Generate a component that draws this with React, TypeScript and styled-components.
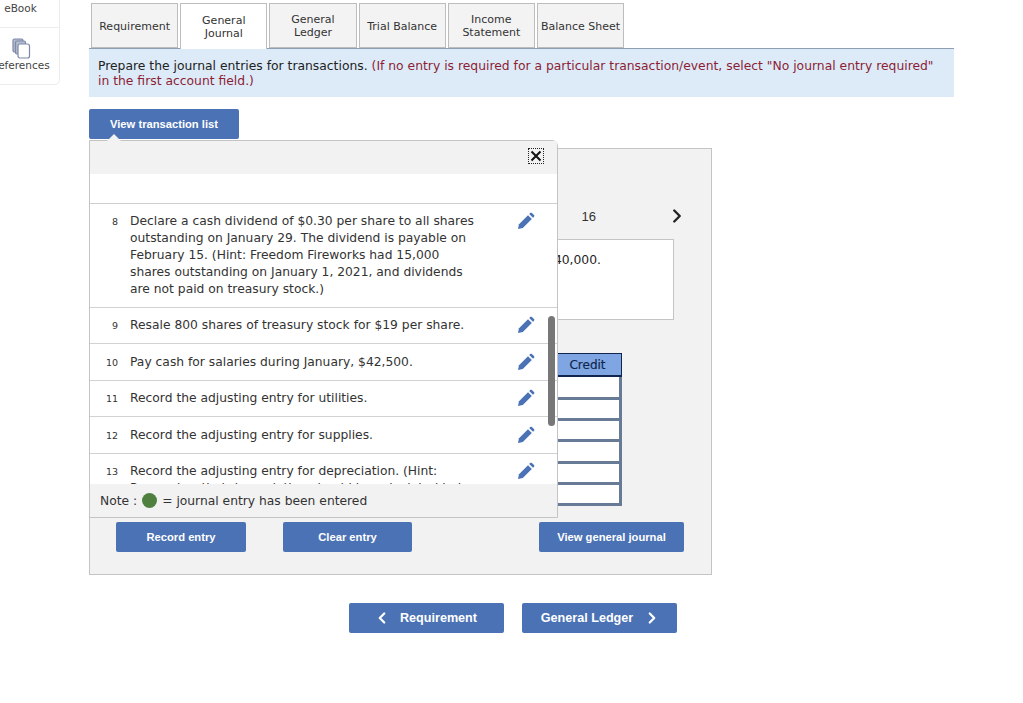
import { ChevronLeft, ChevronRight } from 'lucide-react';
import styled, { createGlobalStyle } from 'styled-components';

const GlobalStyle = createGlobalStyle`
  html, body {
    margin: 0;
    background: #fff;
    overflow: hidden;
  }

  body {
    font-family: "DejaVu Sans", Verdana, sans-serif;
    color: #222;
  }
`;

const Page = styled.div`
  display: flex;
  height: 703px;
`;

const Sidebar = styled.aside`
  flex: none;
  box-sizing: border-box;
  width: 80px;
  height: 95px;
  margin: -10px 0 0 -20px;
  padding-left: 1px;
  border: 1px solid #ececec;
  border-radius: 0 0 5px 0;
  font-size: 10.5px;
  color: #444;
`;

const SideItem = styled.div<{ $tall?: boolean }>`
  display: flex;
  flex-direction: column;
  align-items: center;
  height: ${p => (p.$tall ? '58px' : '36px')};
  padding-top: ${p => (p.$tall ? '10px' : '11px')};
  box-sizing: border-box;
  border-top: ${p => (p.$tall ? '1px solid #ececec' : 'none')};
`;

const SideLabel = styled.span`
  white-space: nowrap;
`;

const SideIcon = styled.svg`
  width: 20px;
  height: 21px;
`;

const Main = styled.main`
  width: 865px;
  margin-left: 29px;
`;

const Tabs = styled.nav`
  display: flex;
  gap: 2px;
  height: 49px;
  padding: 3px 0 0 2px;
  box-sizing: border-box;
  border-bottom: 1px solid #8f9fb3;
`;

const Tab = styled.div<{ $active?: boolean }>`
  display: flex;
  align-items: center;
  justify-content: center;
  box-sizing: border-box;
  width: 87.2px;
  height: ${p => (p.$active ? '46px' : '45px')};
  padding-top: 1px;
  border: 1px solid #bdbdbd;
  border-bottom: ${p => (p.$active ? 'none' : '1px solid #bdbdbd')};
  background: ${p => (p.$active ? '#fff' : '#f3f3f3')};
  text-align: center;
  font-size: 11px;
  line-height: 13px;
  color: #333;
`;

const Banner = styled.div`
  height: 48px;
  padding: 10px 9px 0;
  box-sizing: border-box;
  background: #ddebf8;
  font-size: 12.35px;
  line-height: 15px;
  color: #222;
`;

const Warning = styled.span`
  color: #8c1d35;
`;

const Button = styled.button<{ $w: number; $large?: boolean }>`
  display: inline-flex;
  align-items: center;
  justify-content: center;
  gap: 9px;
  flex: none;
  width: ${p => p.$w}px;
  height: 30px;
  padding: 0;
  border: none;
  border-radius: 2px;
  background: #4a72b5;
  color: #fff;
  font-family: "Liberation Sans", Arial, sans-serif;
  font-weight: bold;
  font-size: ${p => (p.$large ? '12.6px' : '11.2px')};
`;

const ListButtonRow = styled.div`
  margin: 12px 0 9px;
  height: 30px;
`;

const Panel = styled.section`
  position: relative;
  box-sizing: border-box;
  width: 623px;
  height: 427px;
  padding-top: 52px;
  border: 1px solid #c4c4c4;
  background: #f2f2f2;
`;

const StepRow = styled.div`
  display: flex;
  align-items: center;
  justify-content: flex-end;
  gap: 70px;
  height: 30px;
  padding-right: 23px;
  font-family: "Liberation Sans", Arial, sans-serif;
  font-size: 13px;
  color: #333;
`;

const Narrative = styled.div`
  box-sizing: border-box;
  height: 81px;
  margin: 8px 37px 0 24px;
  padding: 13px 72px 0 0;
  border: 1px solid #c4c4c4;
  background: #fff;
  text-align: right;
  font-size: 12.35px;
  line-height: 15px;
`;

const CreditColumn = styled.div`
  box-sizing: border-box;
  width: 80px;
  height: 153px;
  margin: 33px 89px 0 auto;
  border-right: 3px solid #677a96;
  border-bottom: 3px solid #677a96;
`;

const CreditHeader = styled.div`
  box-sizing: border-box;
  height: 24px;
  margin-right: -3px;
  border: 1px solid #10264f;
  border-bottom-width: 2px;
  padding-left: 11px;
  background: #7fa6e3;
  text-align: center;
  font-size: 12px;
  line-height: 22px;
  color: #10264f;
  -webkit-text-stroke: 0.2px #10264f;
`;

const CreditCell = styled.div`
  box-sizing: border-box;
  height: 21.4px;
  background: #fff;
  & + & {
    border-top: 3px solid #677a96;
  }
  ${CreditHeader} + & {
    height: 19.5px;
  }
`;

const ActionRow = styled.div`
  display: flex;
  gap: 37px;
  margin-top: 16px;
  padding: 0 27px 0 26px;
`;

const PushRight = styled.div`
  margin-left: auto;
`;

const Popover = styled.div`
  position: absolute;
  top: -9px;
  left: -1px;
  display: flex;
  flex-direction: column;
  box-sizing: border-box;
  width: 469px;
  height: 378px;
  border: 1px solid #c4c4c4;
  border-radius: 0 6px 0 0;
  background: #fff;
`;

const Caret = styled.div`
  position: absolute;
  top: -7px;
  left: 17px;
  width: 0;
  height: 0;
  border-left: 7px solid transparent;
  border-right: 7px solid transparent;
  border-bottom: 7px solid #f2f2f2;
`;

const PopoverHeader = styled.div`
  display: flex;
  justify-content: flex-end;
  flex: none;
  height: 33px;
  padding: 7px 13px 0 0;
  box-sizing: border-box;
  background: #f2f2f2;
`;

const CloseButton = styled.button`
  display: flex;
  align-items: center;
  justify-content: center;
  box-sizing: border-box;
  width: 16px;
  height: 16px;
  padding: 0;
  border: 1px dotted #222;
  background: transparent;
`;

const PopoverSpacer = styled.div`
  flex: none;
  height: 29px;
  border-bottom: 1px solid #cfcfcf;
`;

const EntryList = styled.div`
  position: relative;
  flex: none;
  height: 280px;
  overflow: hidden;
`;

const Entry = styled.div<{ $h: number }>`
  display: flex;
  box-sizing: border-box;
  height: ${p => p.$h}px;
  padding: ${p => (p.$h === 37 ? '10px' : '9px')} 22px 0 0;
  border-bottom: 1px solid #d2d2d2;
`;

const EntryNumber = styled.span`
  flex: none;
  width: 29px;
  padding-right: 1px;
  box-sizing: border-box;
  text-align: right;
  font-size: 9.5px;
  line-height: 17px;
  color: #333;
`;

const EntryText = styled.div`
  flex: none;
  width: 350px;
  margin-left: 11px;
  font-size: 12.3px;
  line-height: 17px;
  color: #333;
`;

const EntryAction = styled.div`
  display: flex;
  justify-content: flex-end;
  flex: 1;
  margin-top: -1px;
`;

const ScrollThumb = styled.div`
  position: absolute;
  top: 112px;
  right: 2px;
  width: 7px;
  height: 110px;
  border-radius: 4px;
  background: #777;
`;

const NoteBar = styled.div`
  display: flex;
  align-items: center;
  flex: 1;
  gap: 5px;
  padding-left: 10px;
  background: #f2f2f2;
  font-size: 12.3px;
  color: #333;
`;

const Dot = styled.span`
  flex: none;
  width: 15px;
  height: 15px;
  border-radius: 50%;
  background: #4f8040;
`;

const BottomNav = styled.div`
  display: flex;
  gap: 18px;
  margin: 28px 0 0 260px;

  button {
    padding-bottom: 1px;
  }
  button:first-child {
    padding-right: 3px;
  }
  button:last-child {
    gap: 10px;
    padding-left: 3px;
  }
`;

const PencilIcon = () => (
  <svg width="18" height="18" viewBox="0 0 18 18" fill="#4a72b5">
    <path d="M1 17l1-4.8L11 3.2l3.8 3.8L5.8 16z" />
    <path d="M12.2 2l1-1c.5-.5 1.2-.5 1.7 0l2.1 2.1c.5.5.5 1.2 0 1.7l-1 1z" />
  </svg>
);

const entries = [
  {
    n: 8,
    h: 104,
    text: 'Declare a cash dividend of $0.30 per share to all shares outstanding on January 29. The dividend is payable on February 15. (Hint: Freedom Fireworks had 15,000 shares outstanding on January 1, 2021, and dividends are not paid on treasury stock.)',
  },
  { n: 9, h: 36, text: 'Resale 800 shares of treasury stock for $19 per share.' },
  { n: 10, h: 37, text: 'Pay cash for salaries during January, $42,500.' },
  { n: 11, h: 36, text: 'Record the adjusting entry for utilities.' },
  { n: 12, h: 37, text: 'Record the adjusting entry for supplies.' },
  {
    n: 13,
    h: 70,
    text: 'Record the adjusting entry for depreciation. (Hint: Remember that depreciation should be calculated but for only part of the year.)',
  },
];

const App = (): JSX.Element => {
  return (
    <>
      <GlobalStyle />
      <Page>
        <Sidebar>
          <SideItem>
            <SideLabel>eBook</SideLabel>
          </SideItem>
          <SideItem $tall>
            <SideIcon viewBox="0 0 20 21" fill="none" stroke="#7d89a8" strokeWidth="1.2">
              <rect x="2" y="1" width="10" height="13" rx="1.5" fill="#b4bccf" />
              <rect x="4.5" y="3" width="10" height="13" rx="1.5" fill="#b4bccf" />
              <rect x="7" y="6" width="11.5" height="14" rx="2" fill="#fff" />
            </SideIcon>
            <SideLabel>References</SideLabel>
          </SideItem>
        </Sidebar>

        <Main>
          <Tabs>
            <Tab>Requirement</Tab>
            <Tab $active>
              General
              <br />
              Journal
            </Tab>
            <Tab>
              General
              <br />
              Ledger
            </Tab>
            <Tab>Trial Balance</Tab>
            <Tab>
              Income
              <br />
              Statement
            </Tab>
            <Tab>Balance Sheet</Tab>
          </Tabs>

          <Banner>
            Prepare the journal entries for transactions.{' '}
            <Warning>
              (If no entry is required for a particular transaction/event, select "No journal entry required" in the
              first account field.)
            </Warning>
          </Banner>

          <ListButtonRow>
            <Button $w={150}>View transaction list</Button>
          </ListButtonRow>

          <Panel>
            <StepRow>
              <span>16</span>
              <ChevronRight size={22} color="#222" strokeWidth={2.6} />
            </StepRow>
            <Narrative>$40,000.</Narrative>

            <CreditColumn>
              <CreditHeader>Credit</CreditHeader>
              <CreditCell />
              <CreditCell />
              <CreditCell />
              <CreditCell />
              <CreditCell />
              <CreditCell />
            </CreditColumn>

            <ActionRow>
              <Button $w={130}>Record entry</Button>
              <Button $w={129}>Clear entry</Button>
              <PushRight>
                <Button $w={145}>View general journal</Button>
              </PushRight>
            </ActionRow>

            <Popover>
              <Caret />
              <PopoverHeader>
                <CloseButton type="button" aria-label="Close">
                  <svg width="12" height="12" viewBox="0 0 12 12" stroke="#111" strokeWidth="2">
                    <path d="M1.5 1.5l9 9M10.5 1.5l-9 9" />
                  </svg>
                </CloseButton>
              </PopoverHeader>
              <PopoverSpacer />
              <EntryList>
                {entries.map(entry => (
                  <Entry key={entry.n} $h={entry.h}>
                    <EntryNumber>{entry.n}</EntryNumber>
                    <EntryText>{entry.text}</EntryText>
                    <EntryAction>
                      <PencilIcon />
                    </EntryAction>
                  </Entry>
                ))}
                <ScrollThumb />
              </EntryList>
              <NoteBar>
                <span>Note :</span>
                <Dot />
                <span>= journal entry has been entered</span>
              </NoteBar>
            </Popover>
          </Panel>

          <BottomNav>
            <Button $w={155} $large>
              <ChevronLeft size={18} strokeWidth={3} />
              Requirement
            </Button>
            <Button $w={155} $large>
              General Ledger
              <ChevronRight size={18} strokeWidth={3} />
            </Button>
          </BottomNav>
        </Main>
      </Page>
    </>
  );
};

export default App;
